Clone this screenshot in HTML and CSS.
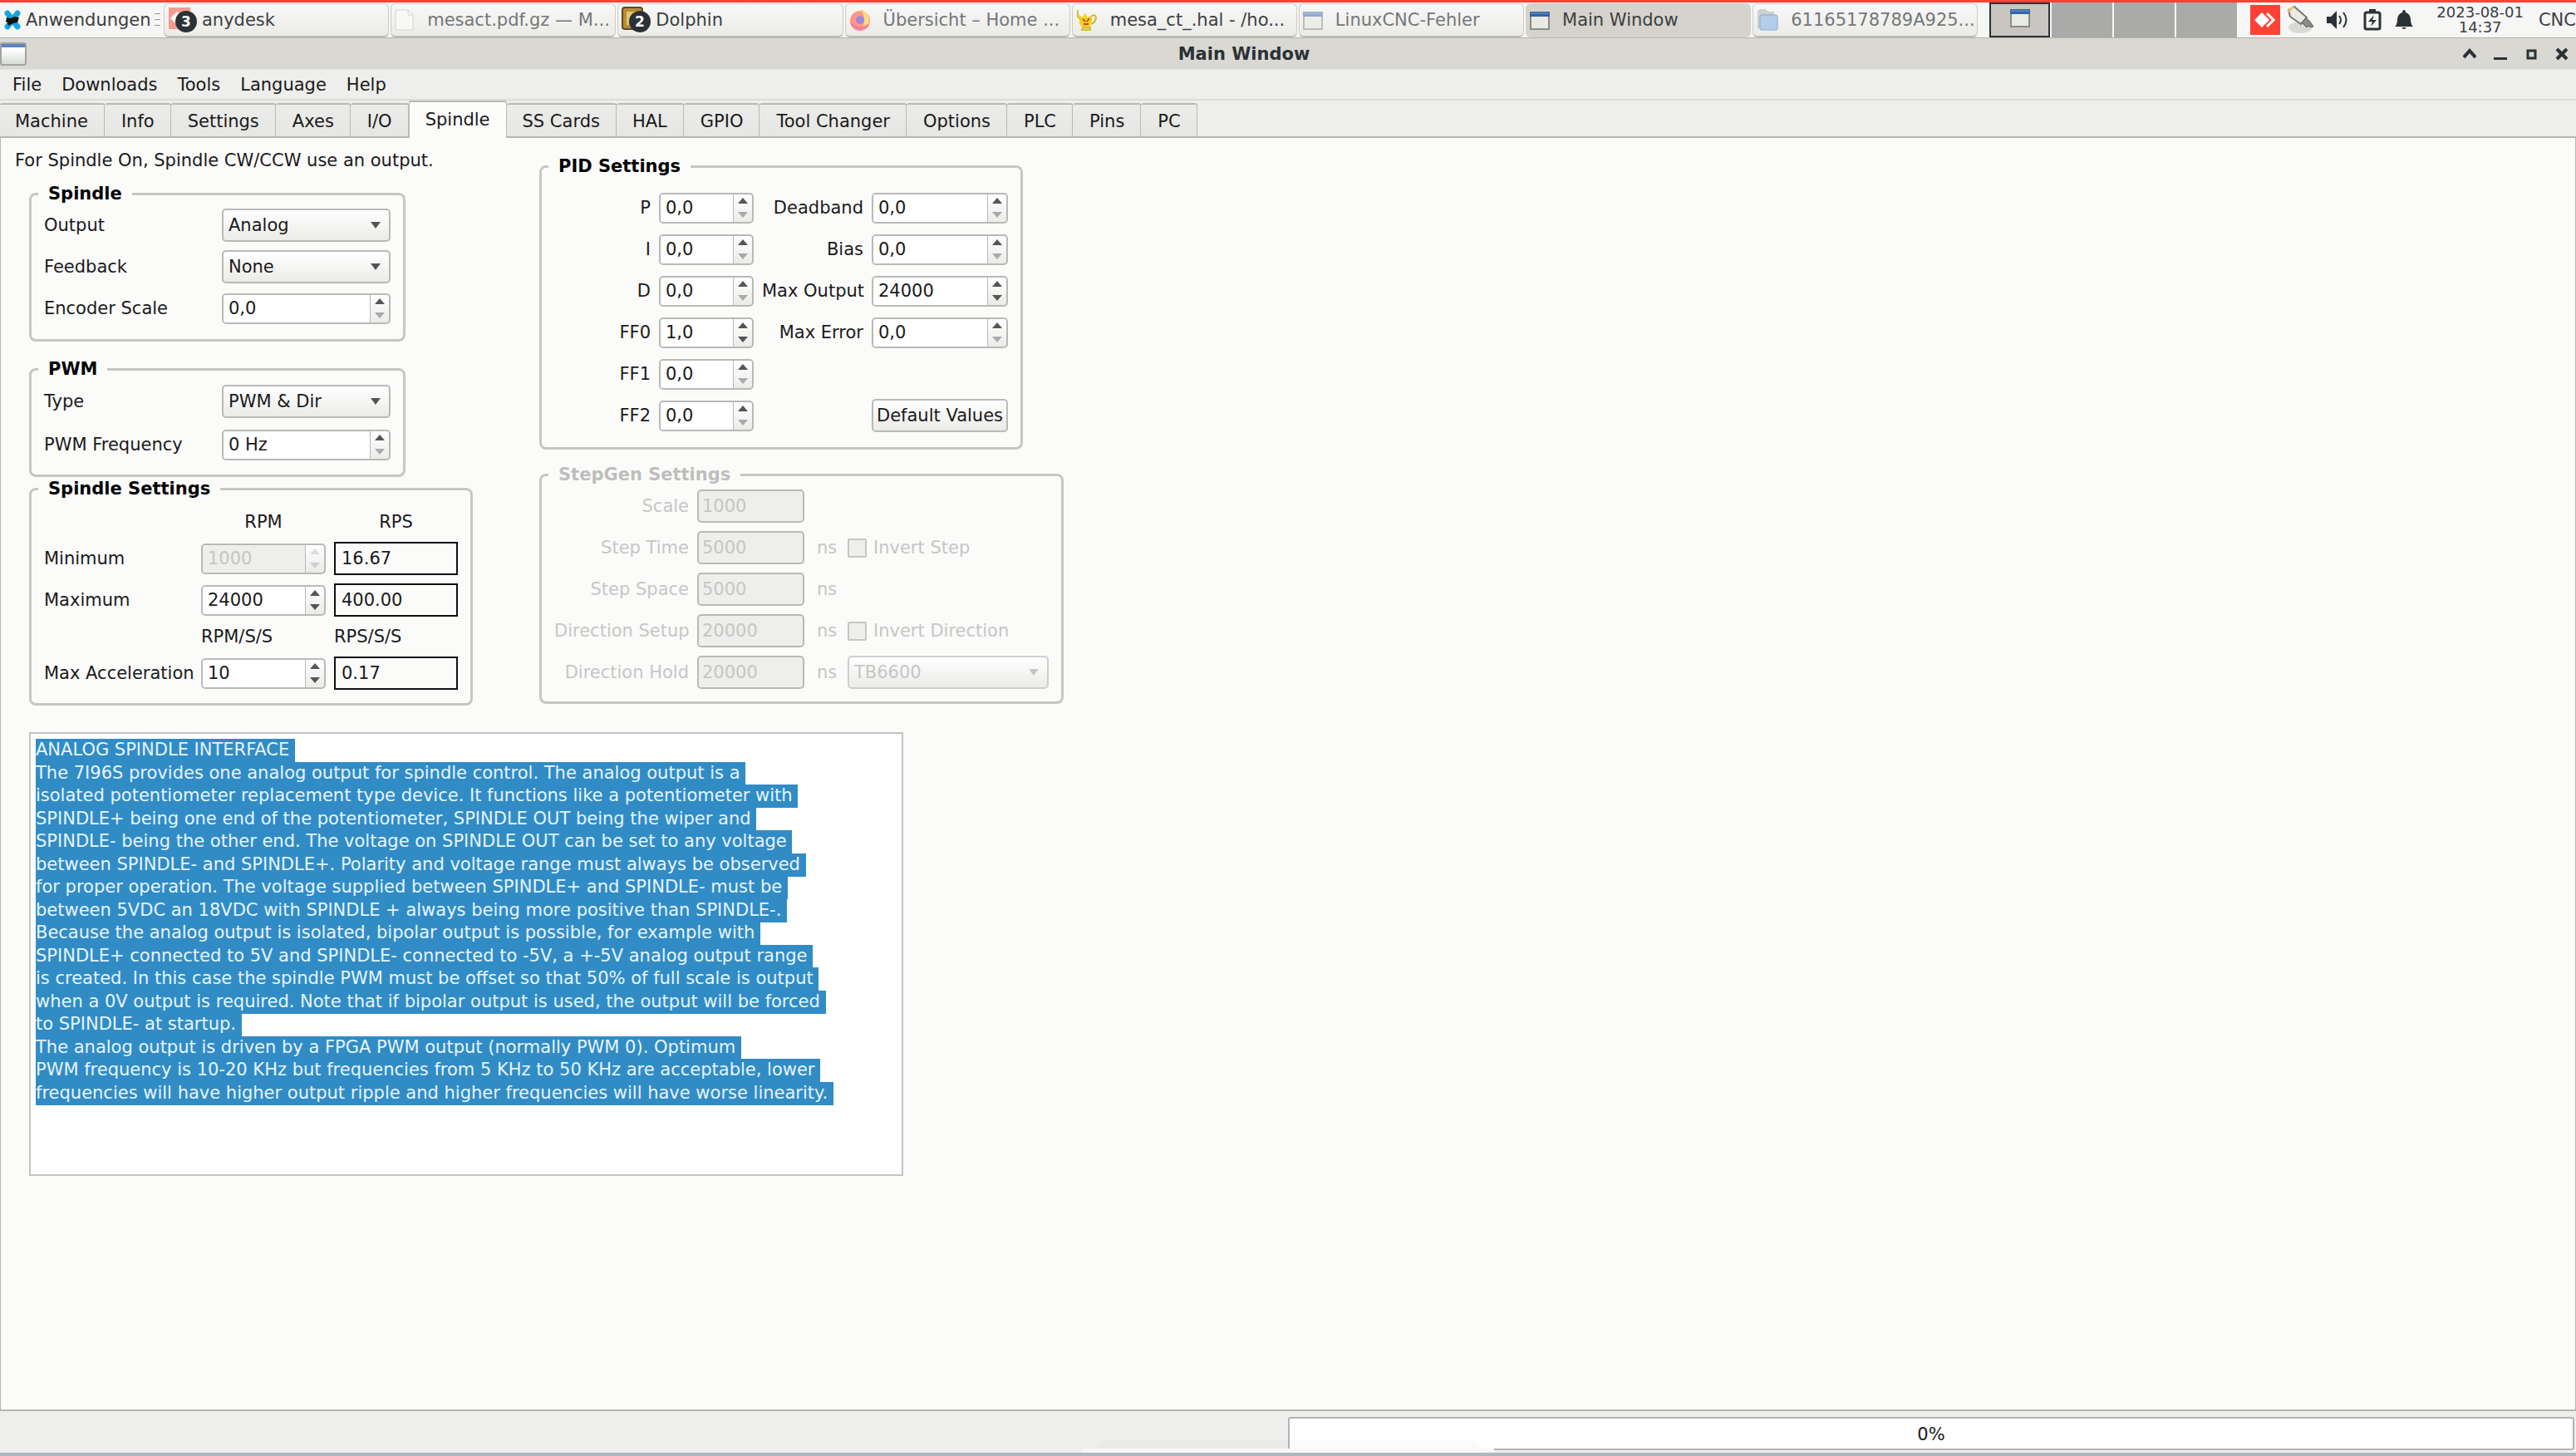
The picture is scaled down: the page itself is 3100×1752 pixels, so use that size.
FILE: index.html
```html
<!DOCTYPE html>
<html lang="en">
<head>
  <meta charset="UTF-8">
  <title>Main Window</title>
  <meta name="viewport" content="width=device-width, initial-scale=1">
  <link rel="stylesheet" href="styles.css">
</head>
<body>
  <header class="panel">
    <button class="apps">
      <svg width="22" height="24" viewBox="0 0 22 24"><path d="M5 4l12 16M17 4L5 20" stroke="#14a6dc" stroke-width="7" stroke-linecap="round"/><path d="M4 9l5 1 4-2 6 1-2 6-5 1-6 3-1-4-2-1z" fill="#111"/></svg>
      Anwendungen
    </button>
    <span class="handle"></span>
    <div class="tasks">
      <button class="task"><svg class="badged" width="36" height="32" viewBox="0 0 36 32"><path d="M1 1h26v26H1z" fill="#f69a94"/><path d="M3 14l8-8 8 8-8 8z" fill="#fff"/><circle cx="22" cy="18" r="13" fill="#2b3235"/><text x="22" y="24" text-anchor="middle" class="badge">3</text></svg>anydesk</button>
      <button class="task dim"><svg width="24" height="26" viewBox="0 0 24 26"><path d="M1 1h15l6 6v18H1z" fill="#f8f8f7" stroke="#d5d5d2"/><path d="M16 1v6h6" fill="none" stroke="#d5d5d2"/></svg><span>mesact.pdf.gz — M...</span></button>
      <button class="task"><svg class="badged" width="36" height="32" viewBox="0 0 36 32"><rect x="1" y="1" width="24" height="26" rx="3" fill="#b98b35" stroke="#5c4a24" stroke-width="2"/><path d="M6 6h12v16H6z" fill="#e4c36d"/><circle cx="22" cy="18" r="13" fill="#2b3235"/><text x="22" y="24" text-anchor="middle" class="badge">2</text></svg>Dolphin</button>
      <button class="task dim"><svg width="26" height="26" viewBox="0 0 26 26"><circle cx="13" cy="14" r="12" fill="#fb9a80"/><path d="M14 0c8 4 12 10 9 18-2 4-5 6-9 7 6-8 5-16 0-25z" fill="#ffdd7c"/><path d="M1 15c1 8 8 11 14 10 5-1 8-4 9-8-8 7-18 4-23-2z" fill="#f87d98"/><circle cx="13" cy="13" r="5" fill="#a184e4"/></svg><span>Übersicht – Home ...</span></button>
      <button class="task"><svg width="26" height="26" viewBox="0 0 26 26"><path d="M19 8c6-3 7 5 0 10" fill="none" stroke="#d3b430" stroke-width="2"/><path d="M4 7l3 3 4-5 3 5 5-3v11l-4 4H8l-4-4z" fill="#f3d121"/><path d="M2 1v8l3 3M8 22h9v3H7z" stroke="#d8bd3b" stroke-width="2" fill="#f5df4e"/><path d="M8 12l3 3M16 11l-3 4M9 18h6" stroke="#c64b22" stroke-width="2"/></svg><span>mesa_ct_.hal - /ho...</span></button>
      <button class="task dim"><svg class="faded" width="24" height="24" viewBox="0 0 24 24"><use href="#window"/></svg><span>LinuxCNC-Fehler</span></button>
      <button class="task active"><svg width="24" height="24" viewBox="0 0 24 24"><g id="window"><path d="M1 3h22v20H1z" fill="#e7ebe4" stroke="#8a8c88" stroke-width="2"/><path d="M0 2h24v6H0z" fill="#3465a4"/><path d="M1 4h22" stroke="#729fcf"/></g></svg><span>Main Window</span></button>
      <button class="task dim"><svg width="26" height="26" viewBox="0 0 26 26"><path d="M1 2l3-2h7l3 3h7v20H1z" fill="#cfcfcb"/><rect x="4" y="7" width="21" height="18" rx="2" fill="#b6cdea" stroke="#86a9d4"/></svg><span>61165178789A925...</span></button>
    </div>
    <div class="pager">
      <button class="desk current" aria-label="Desktop 1"><svg width="24" height="24" viewBox="0 0 24 24"><use href="#window"/></svg></button>
      <button class="desk" aria-label="Desktop 2"></button>
      <button class="desk" aria-label="Desktop 3"></button>
      <button class="desk" aria-label="Desktop 4"></button>
    </div>
    <div class="tray">
      <svg class="anydesk" width="36" height="36" viewBox="0 0 36 36"><path d="M0 0h36v36H0z" fill="#ff4136"/><path d="M5 18l9-9 9 9-9 9z" fill="#fff"/><path d="M20 10l8 8-8 8" fill="none" stroke="#fff" stroke-width="3"/></svg>
      <svg width="32" height="34" viewBox="0 0 32 34"><ellipse cx="16" cy="26" rx="14" ry="7" fill="#000" opacity=".12"/><path d="M2 5l7-4 15 13-7 8L4 13z" fill="#eceae4" stroke="#777" stroke-width="2"/><path d="M18 20l5-5 4 3 5 7-3 1-3-2-2 2z" fill="#8c8c8a" stroke="#555"/><path d="M2 7l6-6" stroke="#f1c76b" stroke-width="3"/></svg>
      <svg width="28" height="24" viewBox="0 0 28 24"><path d="M0 8h5l7-7v22l-7-7H0z" fill="#2b3235"/><path d="M15 7q4 5 0 10M20 3q7 9 0 18" fill="none" stroke="#2b3235" stroke-width="2"/></svg>
      <svg width="22" height="26" viewBox="0 0 22 26"><path d="M7 0h8v4H7z" fill="#2b3235"/><rect x="2" y="4" width="18" height="20" rx="2" fill="none" stroke="#2b3235" stroke-width="3"/><path d="M13 7l-7 8h5l-2 6 7-8h-5z" fill="#2b3235"/></svg>
      <svg width="22" height="24" viewBox="0 0 22 24"><path d="M11 0q2 0 2 3 6 2 6 9 0 5 3 8H0q3-3 3-8 0-7 6-9 0-3 2-3zM8 21h6q-3 4-6 0z" fill="#2b3235"/></svg>
    </div>
    <div class="clock"><span>2023-08-01</span><span>14:37</span></div>
    <span class="user">CNC</span>
  </header>

  <div class="titlebar">
    <svg width="32" height="28" viewBox="0 0 32 28"><defs><linearGradient id="paper" x2="0" y2="1"><stop offset=".3" stop-color="#fff"/><stop offset="1" stop-color="#d5dad2"/></linearGradient></defs><rect x="1" y="1" width="30" height="26" rx="2" fill="url(#paper)" stroke="#a3a49f" stroke-width="2"/><path d="M2 2h28v4H2z" fill="#5b83bd"/></svg>
    <h1>Main Window</h1>
    <div class="winbtns">
      <button aria-label="Shade"><svg width="16" height="16" viewBox="0 0 16 16"><path d="M1 12l7-8 7 8" fill="none" stroke="#2b3235" stroke-width="4"/></svg></button>
      <button aria-label="Minimize"><svg width="16" height="16" viewBox="0 0 16 16"><path d="M0 12h16v3H0z" fill="#2b3235"/></svg></button>
      <button aria-label="Maximize"><svg width="16" height="16" viewBox="0 0 16 16"><path d="M4 4h9v9H4z" fill="none" stroke="#2b3235" stroke-width="3"/></svg></button>
      <button aria-label="Close"><svg width="16" height="16" viewBox="0 0 16 16"><path d="M2 2l12 12M14 2L2 14" stroke="#2b3235" stroke-width="4"/></svg></button>
    </div>
  </div>

  <nav class="menubar">
    <button>File</button><button>Downloads</button><button>Tools</button><button>Language</button><button>Help</button>
  </nav>

  <div class="tabs" role="tablist">
    <button role="tab">Machine</button>
    <button role="tab">Info</button>
    <button role="tab">Settings</button>
    <button role="tab">Axes</button>
    <button role="tab">I/O</button>
    <button role="tab" aria-selected="true" class="selected">Spindle</button>
    <button role="tab">SS Cards</button>
    <button role="tab">HAL</button>
    <button role="tab">GPIO</button>
    <button role="tab">Tool Changer</button>
    <button role="tab">Options</button>
    <button role="tab">PLC</button>
    <button role="tab">Pins</button>
    <button role="tab">PC</button>
  </div>

  <main class="page">
    <div class="columns">
      <div class="left">
        <p class="hint">For Spindle On, Spindle CW/CCW use an output.</p>

        <fieldset class="group narrow">
          <legend>Spindle</legend>
          <div class="form">
            <label for="output">Output</label>
            <select id="output"><option>Analog</option></select>
            <label for="feedback">Feedback</label>
            <select id="feedback"><option>None</option></select>
            <label for="encScale">Encoder Scale</label>
            <span class="spin min"><input id="encScale" value="0,0"><button aria-label="Up"></button><button aria-label="Down"></button></span>
          </div>
        </fieldset>

        <fieldset class="group narrow pwm">
          <legend>PWM</legend>
          <div class="form">
            <label for="pwmType">Type</label>
            <select id="pwmType"><option>PWM &amp; Dir</option></select>
            <label for="pwmFreq">PWM Frequency</label>
            <span class="spin min"><input id="pwmFreq" value="0 Hz"><button aria-label="Up"></button><button aria-label="Down"></button></span>
          </div>
        </fieldset>

        <fieldset class="group speeds">
          <legend>Spindle Settings</legend>
          <div class="form">
            <span></span><span class="head">RPM</span><span class="head">RPS</span>
            <label for="minRpm">Minimum</label>
            <span class="spin off"><input id="minRpm" value="1000" disabled><button aria-label="Up" disabled></button><button aria-label="Down" disabled></button></span>
            <output class="box">16.67</output>
            <label for="maxRpm">Maximum</label>
            <span class="spin"><input id="maxRpm" value="24000"><button aria-label="Up"></button><button aria-label="Down"></button></span>
            <output class="box">400.00</output>
            <span></span><span>RPM/S/S</span><span>RPS/S/S</span>
            <label for="maxAccel">Max Acceleration</label>
            <span class="spin"><input id="maxAccel" value="10"><button aria-label="Up"></button><button aria-label="Down"></button></span>
            <output class="box">0.17</output>
          </div>
        </fieldset>
      </div>

      <div class="right">
        <fieldset class="group pid">
          <legend>PID Settings</legend>
          <div class="form">
            <label for="p">P</label>
            <span class="spin min"><input id="p" value="0,0"><button aria-label="Up"></button><button aria-label="Down"></button></span>
            <label for="deadband">Deadband</label>
            <span class="spin min"><input id="deadband" value="0,0"><button aria-label="Up"></button><button aria-label="Down"></button></span>
            <label for="i">I</label>
            <span class="spin min"><input id="i" value="0,0"><button aria-label="Up"></button><button aria-label="Down"></button></span>
            <label for="bias">Bias</label>
            <span class="spin min"><input id="bias" value="0,0"><button aria-label="Up"></button><button aria-label="Down"></button></span>
            <label for="d">D</label>
            <span class="spin min"><input id="d" value="0,0"><button aria-label="Up"></button><button aria-label="Down"></button></span>
            <label for="maxOutput">Max Output</label>
            <span class="spin"><input id="maxOutput" value="24000"><button aria-label="Up"></button><button aria-label="Down"></button></span>
            <label for="ff0">FF0</label>
            <span class="spin"><input id="ff0" value="1,0"><button aria-label="Up"></button><button aria-label="Down"></button></span>
            <label for="maxError">Max Error</label>
            <span class="spin min"><input id="maxError" value="0,0"><button aria-label="Up"></button><button aria-label="Down"></button></span>
            <label for="ff1">FF1</label>
            <span class="spin min"><input id="ff1" value="0,0"><button aria-label="Up"></button><button aria-label="Down"></button></span>
            <span></span><span></span>
            <label for="ff2">FF2</label>
            <span class="spin min"><input id="ff2" value="0,0"><button aria-label="Up"></button><button aria-label="Down"></button></span>
            <span></span>
            <button class="push">Default Values</button>
          </div>
        </fieldset>

        <fieldset class="group stepgen" disabled>
          <legend>StepGen Settings</legend>
          <div class="form">
            <label for="scale">Scale</label><input id="scale" class="line" value="1000"><span></span><span></span>
            <label for="stepTime">Step Time</label><input id="stepTime" class="line" value="5000"><span>ns</span>
            <label class="check"><input type="checkbox">Invert Step</label>
            <label for="stepSpace">Step Space</label><input id="stepSpace" class="line" value="5000"><span>ns</span><span></span>
            <label for="dirSetup">Direction Setup</label><input id="dirSetup" class="line" value="20000"><span>ns</span>
            <label class="check"><input type="checkbox">Invert Direction</label>
            <label for="dirHold">Direction Hold</label><input id="dirHold" class="line" value="20000"><span>ns</span>
            <select aria-label="Drive"><option>TB6600</option></select>
          </div>
        </fieldset>
      </div>
    </div>

    <textarea id="info" class="info" aria-label="Spindle info" readonly>ANALOG SPINDLE INTERFACE
The 7I96S provides one analog output for spindle control. The analog output is a
isolated potentiometer replacement type device. It functions like a potentiometer with
SPINDLE+ being one end of the potentiometer, SPINDLE OUT being the wiper and
SPINDLE- being the other end. The voltage on SPINDLE OUT can be set to any voltage
between SPINDLE- and SPINDLE+. Polarity and voltage range must always be observed
for proper operation. The voltage supplied between SPINDLE+ and SPINDLE- must be
between 5VDC an 18VDC with SPINDLE + always being more positive than SPINDLE-.
Because the analog output is isolated, bipolar output is possible, for example with
SPINDLE+ connected to 5V and SPINDLE- connected to -5V, a +-5V analog output range
is created. In this case the spindle PWM must be offset so that 50% of full scale is output
when a 0V output is required. Note that if bipolar output is used, the output will be forced
to SPINDLE- at startup.
The analog output is driven by a FPGA PWM output (normally PWM 0). Optimum
PWM frequency is 10-20 KHz but frequencies from 5 KHz to 50 KHz are acceptable, lower
frequencies will have higher output ripple and higher frequencies will have worse linearity.
</textarea>
  </main>

  <footer class="statusbar">
    <div class="progress" role="progressbar" aria-valuenow="0" aria-valuemin="0" aria-valuemax="100">0%</div>
    <div class="dock-hint"></div>
  </footer>

  <script>
    // the info text starts out selected
    const info = document.getElementById('info');
    info.focus();
    info.select();
  </script>
</body>
</html>
```
FILE: styles.css
```css
* { box-sizing: border-box; }
body { margin: 0; height: 100vh; display: flex; flex-direction: column; overflow: hidden; background: #eeeeec; color: #1a1a1a; font: 21px/26px "DejaVu Sans", sans-serif; border-top: 3px solid #ff4136; border-bottom: 4px solid #adb9bd; }
button, input, select, textarea { font: inherit; color: inherit; margin: 0; }
button { padding: 0; border: 0; background: none; white-space: nowrap; }

/* desktop panel */
.panel { display: flex; align-items: center; height: 43px; flex: none; background: #f6f6f5; border-bottom: 1px solid #b5b2aa; color: #3c4043; }
.panel > * { flex: none; }
.apps { display: flex; align-items: center; gap: 5px; width: 184px; padding-left: 4px; }
.handle { width: 7px; height: 16px; margin: 0 4px 0 2px; background: repeating-linear-gradient(#999 0 1px, transparent 1px 7px); }
.panel .tasks { display: flex; gap: 2px; height: 41px; flex: 0 1 2184px; min-width: 0; }
.task { flex: 1 1 0; min-width: 0; display: flex; align-items: center; gap: 15px; padding: 0 4px; border: 1px solid #cfccc4; border-bottom: 2px solid #bfbdb5; border-radius: 6px; background: linear-gradient(#f8f8f7, #ebebe8); overflow: hidden; }
.task svg { flex: none; }
.task .badged { margin-right: -10px; }
.task.dim { color: #74787a; }
.task.active { background: #d6d3cd; border-color: #d6d3cd; }
.faded { opacity: .5; }
.badge { font: bold 17px "DejaVu Sans", sans-serif; fill: #fff; }
.pager { display: flex; gap: 2px; height: 42px; margin-left: 14px; }
.desk { width: 73px; background: #aaaaa8; }
.desk.current { border: 2px solid #2b3235; background: #c9c6bf; }
.tray { display: flex; align-items: center; gap: 16px; margin: 0 28px 0 16px; }
.tray .anydesk { margin-right: -8px; }
.clock { display: flex; flex-direction: column; align-items: center; font-size: 18px; line-height: 18px; white-space: nowrap; }
.user { margin-left: 18px; }

.titlebar { display: grid; grid-template-columns: 32px 1fr 138px; align-items: center; height: 38px; flex: none; background: #d9d8d3; border-bottom: 1px solid #e2e2df; }
.titlebar h1 { margin: 0; font-size: 21px; text-align: center; color: #2b3235; }
.winbtns { display: flex; gap: 21px; padding-left: 2px; }
.winbtns svg { display: block; }

.menubar { display: flex; gap: 24px; height: 37px; flex: none; padding: 1px 15px 0; border-bottom: 2px solid #dcdcda; }

.tabs { display: flex; align-items: flex-end; height: 45px; flex: none; border-bottom: 2px solid #b4b4b2; }
.tabs button { height: 40px; padding: 2px 19px 0 20px; border: 1px solid #b9b9b7; border-width: 2px 1px 0 0; border-radius: 3px 3px 0 0; background: linear-gradient(#ececea, #e6e6e4); }
.tabs button:first-child { padding-left: 18px; }
.tabs .selected { height: 45px; margin-bottom: -2px; padding: 2px 19px 4px; background: #fcfcfa; border-left-width: 1px; }
.tabs .selected ~ button { padding: 2px 19px 0; }
.tabs button:nth-child(n+9) { padding-left: 20px; }

.page { flex: 1; min-height: 0; padding: 14px 18px 0 34px; background: #fbfbfa; border: 1px solid #b4b4b2; border-width: 0 1px 2px; }
.columns { display: flex; gap: 80px; }
.left { width: 534px; }
.hint { margin: 0 0 15px -17px; white-space: nowrap; }
.right { padding-top: 8px; }

/* group boxes */
.group { margin: 0; padding: 0 15px 11px; border: 3px solid #c6c6c4; border-radius: 8px; min-width: 0; }
.group legend { margin-left: -7px; padding: 0 12px; font-weight: bold; line-height: 24px; color: #000; }
.form { display: grid; align-items: center; grid-auto-rows: 50px; }
.narrow { width: 453px; margin-bottom: 21px; }
.narrow .form { grid-template-columns: 1fr 203px; padding: 1px 0; }
.pwm { margin-bottom: 2px; }
.pwm .form { row-gap: 2px; padding: 2px 0 0; }
.speeds .form { grid-template-columns: 1fr 150px 149px; column-gap: 10px; grid-template-rows: 38px 50px 50px 38px 50px; padding-top: 9px; }
.speeds label { white-space: nowrap; margin-right: -10px; }
.head { text-align: center; }
.pid { width: 582px; padding-bottom: 13px; margin-bottom: 18px; }
.pid .form { grid-template-columns: 117px 114px 122px 164px; column-gap: 10px; justify-content: end; padding-top: 13px; }
.pid label, .stepgen label[for] { text-align: right; white-space: nowrap; }
.stepgen { width: 631px; padding-bottom: 10px; color: #c6c6c4; }
.stepgen legend { color: #bebebc; }
.stepgen .form { grid-template-columns: 162px 129px 32px 242px; column-gap: 10px; justify-content: end; padding-top: 1px; }
.stepgen span { margin-left: 5px; }

/* widgets */
select { appearance: none; width: 100%; height: 40px; padding: 0 6px; border: 2px solid #b9b9b7; border-radius: 5px; background-image: url('data:image/svg+xml,<svg xmlns="http://www.w3.org/2000/svg" width="12" height="8"><path d="M0 0h12L6 8z" fill="%23555"/></svg>'), linear-gradient(#fff, #ebebe9); background-repeat: no-repeat; background-position: right 10px center, 0 0; }
select:disabled { opacity: 1; color: #c6c6c4; border-color: #cfcfcd; background-image: url('data:image/svg+xml,<svg xmlns="http://www.w3.org/2000/svg" width="12" height="8"><path d="M0 0h12L6 8z" fill="%23c6c6c4"/></svg>'), linear-gradient(#fff, #ebebe9); }
.spin { display: grid; grid-template-columns: 1fr 22px; grid-template-rows: 1fr 1fr; height: 37px; border: 2px solid #b9b9b7; border-radius: 5px; background: linear-gradient(#fff, #ebebe9); overflow: hidden; }
.spin input { grid-row: 1 / 3; width: 100%; min-width: 0; padding: 0 6px; border: 0; border-right: 1px solid #b9b9b7; background: #fff; outline: 0; }
.spin button { display: flex; justify-content: center; align-items: center; }
.spin button::before { content: ""; border: 6px solid transparent; border-top-width: 0; border-bottom: 7px solid #555; }
.spin button:last-child::before { border-width: 7px 6px 0; border-color: #555 transparent transparent; }
.spin.min button:last-child::before { border-top-color: #aaa; }
.spin.off input { background: #eeeeec; color: #c6c6c4; }
.spin.off button::before { border-bottom-color: #ddd; }
.spin.off button:last-child::before { border-top-color: #d0d0d0; }
.box { height: 40px; border: 2px solid #111; padding: 5px 7px; }
.line { width: 100%; height: 40px; padding: 0 4px; border: 2px solid #b9b9b7; border-radius: 5px; background: #eeeeec; }
.check { display: flex; align-items: center; gap: 8px; }
.check input { appearance: none; width: 23px; height: 23px; border: 2px solid #c6c6c4; border-radius: 2px; background: #eeeeec; }
.push { height: 40px; border: 2px solid #b9b9b7; border-radius: 5px; background: linear-gradient(#fff, #ebebe9); }

.info { display: block; width: 1052px; height: 534px; margin-top: 32px; padding: 6px; border: 2px solid #c3c3c1; background: #fff; line-height: 1.31; resize: none; outline: 0; overflow: hidden; white-space: pre; }
.info::selection { background: rgba(48, 140, 198, .996); color: #e6f5ff; }

.statusbar { position: relative; height: 50px; flex: none; padding: 7px 2px 3px; }
.progress { height: 40px; margin-left: 50%; border: 2px solid #b4b4b2; border-radius: 3px; background: #fff; text-align: center; line-height: 38px; }
/* edge of the hidden dock */
.dock-hint { position: absolute; left: 42%; width: 16%; bottom: 0; height: 5px; background: #f6f7f6; }
.dock-hint::before { content: ""; position: absolute; left: 16px; right: 16px; bottom: 5px; height: 10px; border-radius: 20px 20px 0 0; background: rgba(0, 0, 0, .015); }
```
